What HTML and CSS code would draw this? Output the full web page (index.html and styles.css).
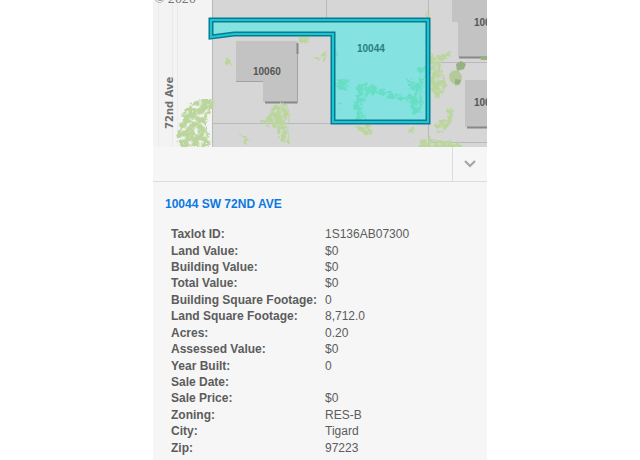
FILE: index.html
```html
<!DOCTYPE html>
<html lang="en">

<head>
    <meta charset="UTF-8">
    <meta name="viewport" content="width=device-width, initial-scale=1.0">
    <title>10044 SW 72nd Ave</title>
    <link rel="stylesheet" href="styles.css">
</head>

<body>
    <main class="panel">
        <svg class="map" viewBox="0 0 334 147" role="img" aria-label="Taxlot map">
            <defs>
                <!-- breaks flat shapes up into leafy patches -->
                <filter id="leaves" x="-20%" y="-20%" width="140%" height="140%" color-interpolation-filters="sRGB">
                    <feTurbulence type="fractalNoise" baseFrequency="0.22" numOctaves="3" seed="4" result="noise" />
                    <feDisplacementMap in="SourceGraphic" in2="noise" scale="10" xChannelSelector="R" yChannelSelector="G" result="shape" />
                    <feColorMatrix in="noise" type="matrix" values="0 0 0 0 0  0 0 0 0 0  0 0 0 0 0  4 0 0 0 -1" result="holes" />
                    <feComposite in="shape" in2="holes" operator="in" />
                </filter>
            </defs>

            <rect class="road" width="334" height="147" />
            <path class="road-line" d="M5.5 0V147M19.500 0V147M24.500 0V147" />
            <rect class="land" x="59" width="275" height="147" />
            <path class="lot-line" d="M59.500 0V147M59 123.500H180M173.500 0V18M275.500 0V18M275.500 124V147M276 62.500H334M275 142.500H334" />

            <path class="building" d="M83 41H144V102H110V81H83Z" />
            <path class="building" d="M299 0H334V57H305V22H299Z" />
            <path class="building" d="M312 80H334V127H312Z" />
            <path class="shadow" d="M144.500 43V54M112 102.500H144.500M306 57.500H334M314 127.500H334" />
            <path class="shadow thin" d="M144.500 54V102M83 81.500H110" />

            <g class="trees" filter="url(#leaves)">
                <path d="M37 103L47 99L60 99L61 107L54 117L54 130L58 142L52 149H28L25 136L27 124L31 112Z" />
                <path d="M119 106L134 103L137 116L134 126L138 143L130 142L124 128L108 123L116 116Z" />
                <path d="M148 36L157 38L153 45L147 42ZM71 60L80 59L78 66L72 65ZM160 56L168 58L166 63ZM87 134L96 138L94 145Z" />
                <path d="M277 46L281 58L297 51L297 56L288 65L290 73L295 84L290 94L283 98L279 84L277 72Z" />
                <path d="M296 106L301 110L298 123L289 132L281 131L283 124L293 119Z" />
                <path d="M203 126L217 125L220 134L211 135ZM255 128L263 129L258 134Z" />
                <path d="M264 139L276 137L285 141L306 142L311 149H266ZM273 6L277 15L274 18Z" />
                <path d="M168 54L174 52L172 62Z" />
            </g>
            <path class="tree-dark" d="M303 64L308 61L313 64L311 69L304 71Z" />
            <path class="tree-mid" d="M299 71L305 70L309 76L308 83L303 86L297 81L296 75Z" />
            <path class="tree-dark" d="M302 79L308 80L306 85L302 84ZM327 56H334V60H328Z" />

            <path class="lot-fill" d="M59 20H275V122H180V34H81L59 37Z" />
            <g class="lot-trees" filter="url(#leaves)">
                <path d="M205 84L216 84L225 89L239 93L254 97L264 92L255 85L254 77L263 84L269 76L265 68L274 65L273 75L268 91L270 98L267 115L259 112L257 101L240 98L221 93L213 97L208 106L213 119L204 120L201 106Z" />
                <path d="M182 80L196 79L194 91L184 87ZM185 103L190 103L188 108ZM181 48L185 52L183 62Z" />
            </g>
            <path class="lot-edge" d="M58 20H275V122H180V34H81L58 37Z" />
            <path class="lot-core" d="M58 20H275V122H180V34H81L58 37Z" />

            <text class="house" x="100" y="75">10060</text>
            <text class="house selected" x="204" y="52">10044</text>
            <text class="house" x="321" y="26">100</text>
            <text class="house" x="321" y="106">100</text>
            <text class="street" transform="translate(20 129) rotate(-90)">72nd Ave</text>
            <text class="copyright" x="1" y="3">© 2020</text>
        </svg>

        <div class="toolbar">
            <button class="collapse" type="button" aria-label="Collapse details">
                <svg width="12" height="8" viewBox="0 0 12 8"><path d="M1 1L6 6L11 1" /></svg>
            </button>
        </div>

        <section class="details">
            <h1><a href="#">10044 SW 72ND AVE</a></h1>
            <table>
                <tr><th scope="row">Taxlot ID:</th><td>1S136AB07300</td></tr>
                <tr><th scope="row">Land Value:</th><td>$0</td></tr>
                <tr><th scope="row">Building Value:</th><td>$0</td></tr>
                <tr><th scope="row">Total Value:</th><td>$0</td></tr>
                <tr><th scope="row">Building Square Footage:</th><td>0</td></tr>
                <tr><th scope="row">Land Square Footage:</th><td>8,712.0</td></tr>
                <tr><th scope="row">Acres:</th><td>0.20</td></tr>
                <tr><th scope="row">Assessed Value:</th><td>$0</td></tr>
                <tr><th scope="row">Year Built:</th><td>0</td></tr>
                <tr><th scope="row">Sale Date:</th><td></td></tr>
                <tr><th scope="row">Sale Price:</th><td>$0</td></tr>
                <tr><th scope="row">Zoning:</th><td>RES-B</td></tr>
                <tr><th scope="row">City:</th><td>Tigard</td></tr>
                <tr><th scope="row">Zip:</th><td>97223</td></tr>
            </table>
        </section>
    </main>
</body>

</html>
```
FILE: styles.css
```css
* {
    box-sizing: border-box;
}

body {
    margin: 0;
    background: #fff;
    color: #5c5c5c;
    font-family: "Liberation Sans", Arial, sans-serif;
    font-size: 12px;
}

.panel {
    max-width: 334px;
    margin: 0 auto;
    background: #f6f6f6;
}

/* map */
.map {
    display: block;
    width: 100%;
}

.road {
    fill: #f3f3f3;
}

.road-line {
    stroke: #ebebeb;
}

.land {
    fill: #d6d6d6;
}

.lot-line {
    stroke: #b9b9b9;
}

.building {
    fill: #c3c3c3;
}

.shadow {
    stroke: #888;
    stroke-width: 2;
}

.shadow.thin {
    stroke: #a2a2a2;
    stroke-width: 1;
}

.trees {
    fill: #bbd69c;
}

.tree-mid {
    fill: #b5c99a;
}

.tree-dark {
    fill: #98b184;
}

.lot-fill {
    fill: #84e2e0;
}

.lot-trees {
    fill: #66dec4;
}

.lot-edge,
.lot-core {
    fill: none;
    stroke: #087b92;
    stroke-width: 5;
}

.lot-core {
    stroke: #1cc6d0;
    stroke-width: 2;
}

.house {
    fill: #555;
    font-size: 10px;
    font-weight: bold;
}

.house.selected {
    fill: #27807f;
}

.street {
    fill: #707070;
    font-family: "DejaVu Sans", Verdana, sans-serif;
    font-size: 10px;
    font-weight: bold;
}

.copyright {
    fill: #777;
    font-family: "Liberation Serif", serif;
    font-size: 14px;
    font-style: italic;
}

/* bar under the map */
.toolbar {
    display: flex;
    justify-content: flex-end;
    height: 35px;
    border-bottom: 1px solid #dcdcdc;
}

.collapse {
    display: flex;
    align-items: center;
    justify-content: center;
    width: 35px;
    padding: 0;
    border: 0;
    border-left: 1px solid #dcdcdc;
    background: none;
}

.collapse path {
    fill: none;
    stroke: #a3a3a3;
    stroke-width: 2;
}

/* taxlot details */
.details {
    padding: 14px 12px 4px;
}

h1 {
    margin: 0;
    font-size: 12px;
    line-height: 16px;
}

h1 a {
    color: #0c78e2;
    text-decoration: none;
}

table {
    height: 230px;
    margin: 14px 0 0 6px;
    border-collapse: collapse;
}

th,
td {
    padding: 0;
    line-height: 16px;
    text-align: left;
}

th {
    width: 154px;
}
```
